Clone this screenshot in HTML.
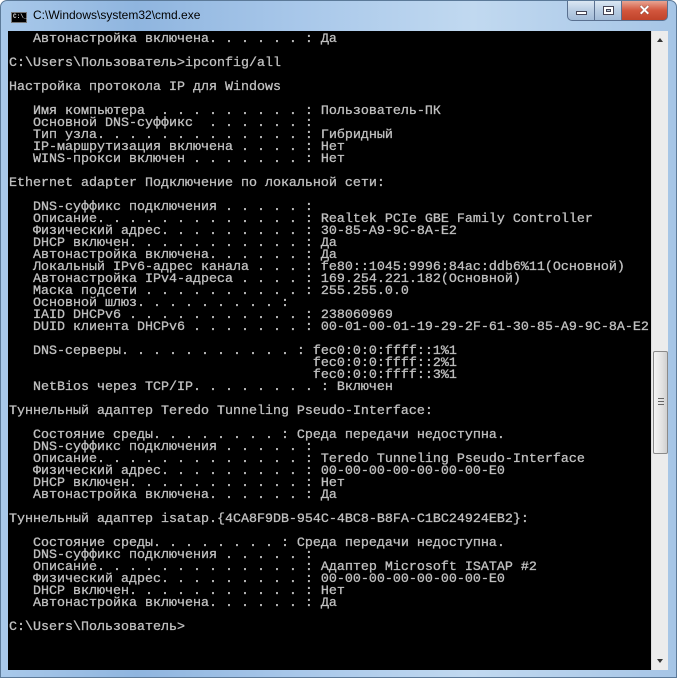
<!DOCTYPE html>
<html><head><meta charset="utf-8"><style>
*{margin:0;padding:0;box-sizing:border-box}
body{width:677px;height:678px;overflow:hidden;background:#fff}
.win{position:absolute;left:0;top:0;width:677px;height:678px;border-radius:7px 7px 0 0;
background:linear-gradient(90deg,#a9c9ea 0%,#8fb5df 20%,#a9c8ea 45%,#c1d9f0 70%,#a6c5e6 100%);border:1px solid #5c7a99}
.title{position:absolute;left:32px;top:7px;font:12px "Liberation Sans",sans-serif;color:#000}
.ico{position:absolute;left:10px;top:11px;width:16px;height:11px;background:#000;border:1px solid #777}
.ico span{position:absolute;left:1px;top:1px;font:bold 6px "Liberation Mono",monospace;color:#ddd;line-height:6px}
.btn{position:absolute;top:0;height:20px;border:1px solid #5a7090;border-top:none}
.min{left:566px;width:28px;border-radius:0 0 0 5px;background:linear-gradient(#dbe7f3,#b9cde3 50%,#a3bcd8)}
.max{left:593px;width:28px;background:linear-gradient(#dbe7f3,#b9cde3 50%,#a3bcd8)}
.cls{left:620px;width:47px;border-radius:0 0 5px 0;background:linear-gradient(#e8a493,#d2563d 50%,#c0432a)}
.con{position:absolute;left:8px;top:31px;width:643px;height:639px;background:#000;overflow:hidden}
pre{position:absolute;left:1px;top:3px;font:13.33px/12px "Liberation Mono","DejaVu Sans Mono",monospace;color:#c0c0c0;letter-spacing:0;white-space:pre;-webkit-text-stroke:0.3px #c0c0c0}
.sb{position:absolute;left:651px;top:31px;width:17px;height:639px;background:#ececec;border-left:1px solid #ddd}
.thumb{position:absolute;left:1px;top:320px;width:15px;height:103px;border:1px solid #8a8a8a;border-radius:2px;background:linear-gradient(90deg,#f4f4f4,#e2e2e2 60%,#d0d0d0)}
.grip{position:absolute;left:4px;top:46px;width:6px;height:7px;border-top:1px solid #666;border-bottom:1px solid #666}
.grip:after{content:"";position:absolute;left:0;top:2px;width:6px;height:1px;background:#666}
.ar{position:absolute;left:5px;width:0;height:0;border-left:3px solid transparent;border-right:3px solid transparent}
</style></head><body>
<div class="win">
<div class="ico"><span>C:\_</span></div>
<div class="title">C:\Windows\system32\cmd.exe</div>
<div class="btn min"><div style="position:absolute;left:8px;top:10px;width:11px;height:4px;background:#fff;border:1px solid #445"></div></div>
<div class="btn max"><div style="position:absolute;left:8px;top:5px;width:11px;height:9px;border:1px solid #445;background:#fff"><div style="margin:2px;height:3px;border:1px solid #445;background:#bcd"></div></div></div>
<div class="btn cls"><div style="position:absolute;left:0;top:0;width:45px;text-align:center;font:bold 14px/19px 'Liberation Sans',sans-serif;color:#fff;text-shadow:0 0 1px #333">✕</div></div>
</div>
<div class="con"><pre>   Автонастройка включена. . . . . . : Да

C:\Users\Пользователь>ipconfig/all

Настройка протокола IP для Windows

   Имя компьютера  . . . . . . . . . : Пользователь-ПК
   Основной DNS-суффикс  . . . . . . :
   Тип узла. . . . . . . . . . . . . : Гибридный
   IP-маршрутизация включена . . . . : Нет
   WINS-прокси включен . . . . . . . : Нет

Ethernet adapter Подключение по локальной сети:

   DNS-суффикс подключения . . . . . :
   Описание. . . . . . . . . . . . . : Realtek PCIe GBE Family Controller
   Физический адрес. . . . . . . . . : 30-85-A9-9C-8A-E2
   DHCP включен. . . . . . . . . . . : Да
   Автонастройка включена. . . . . . : Да
   Локальный IPv6-адрес канала . . . : fe80::1045:9996:84ac:ddb6%11(Основной)
   Автонастройка IPv4-адреса . . . . : 169.254.221.182(Основной)
   Маска подсети . . . . . . . . . . : 255.255.0.0
   Основной шлюз. . . . . . . . . :
   IAID DHCPv6 . . . . . . . . . . . : 238060969
   DUID клиента DHCPv6 . . . . . . . : 00-01-00-01-19-29-2F-61-30-85-A9-9C-8A-E2

   DNS-серверы. . . . . . . . . . . : fec0:0:0:ffff::1%1
                                      fec0:0:0:ffff::2%1
                                      fec0:0:0:ffff::3%1
   NetBios через TCP/IP. . . . . . . . : Включен

Туннельный адаптер Teredo Tunneling Pseudo-Interface:

   Состояние среды. . . . . . . . : Среда передачи недоступна.
   DNS-суффикс подключения . . . . . :
   Описание. . . . . . . . . . . . . : Teredo Tunneling Pseudo-Interface
   Физический адрес. . . . . . . . . : 00-00-00-00-00-00-00-E0
   DHCP включен. . . . . . . . . . . : Нет
   Автонастройка включена. . . . . . : Да

Туннельный адаптер isatap.{4CA8F9DB-954C-4BC8-B8FA-C1BC24924EB2}:

   Состояние среды. . . . . . . . : Среда передачи недоступна.
   DNS-суффикс подключения . . . . . :
   Описание. . . . . . . . . . . . . : Адаптер Microsoft ISATAP #2
   Физический адрес. . . . . . . . . : 00-00-00-00-00-00-00-E0
   DHCP включен. . . . . . . . . . . : Нет
   Автонастройка включена. . . . . . : Да

C:\Users\Пользователь&gt;</pre></div>
<div class="sb">
<div class="ar" style="top:7px;border-bottom:4px solid #333"></div>
<div class="thumb"><div class="grip"></div></div>
<div class="ar" style="top:628px;border-top:4px solid #333"></div>
</div>
</body></html>
